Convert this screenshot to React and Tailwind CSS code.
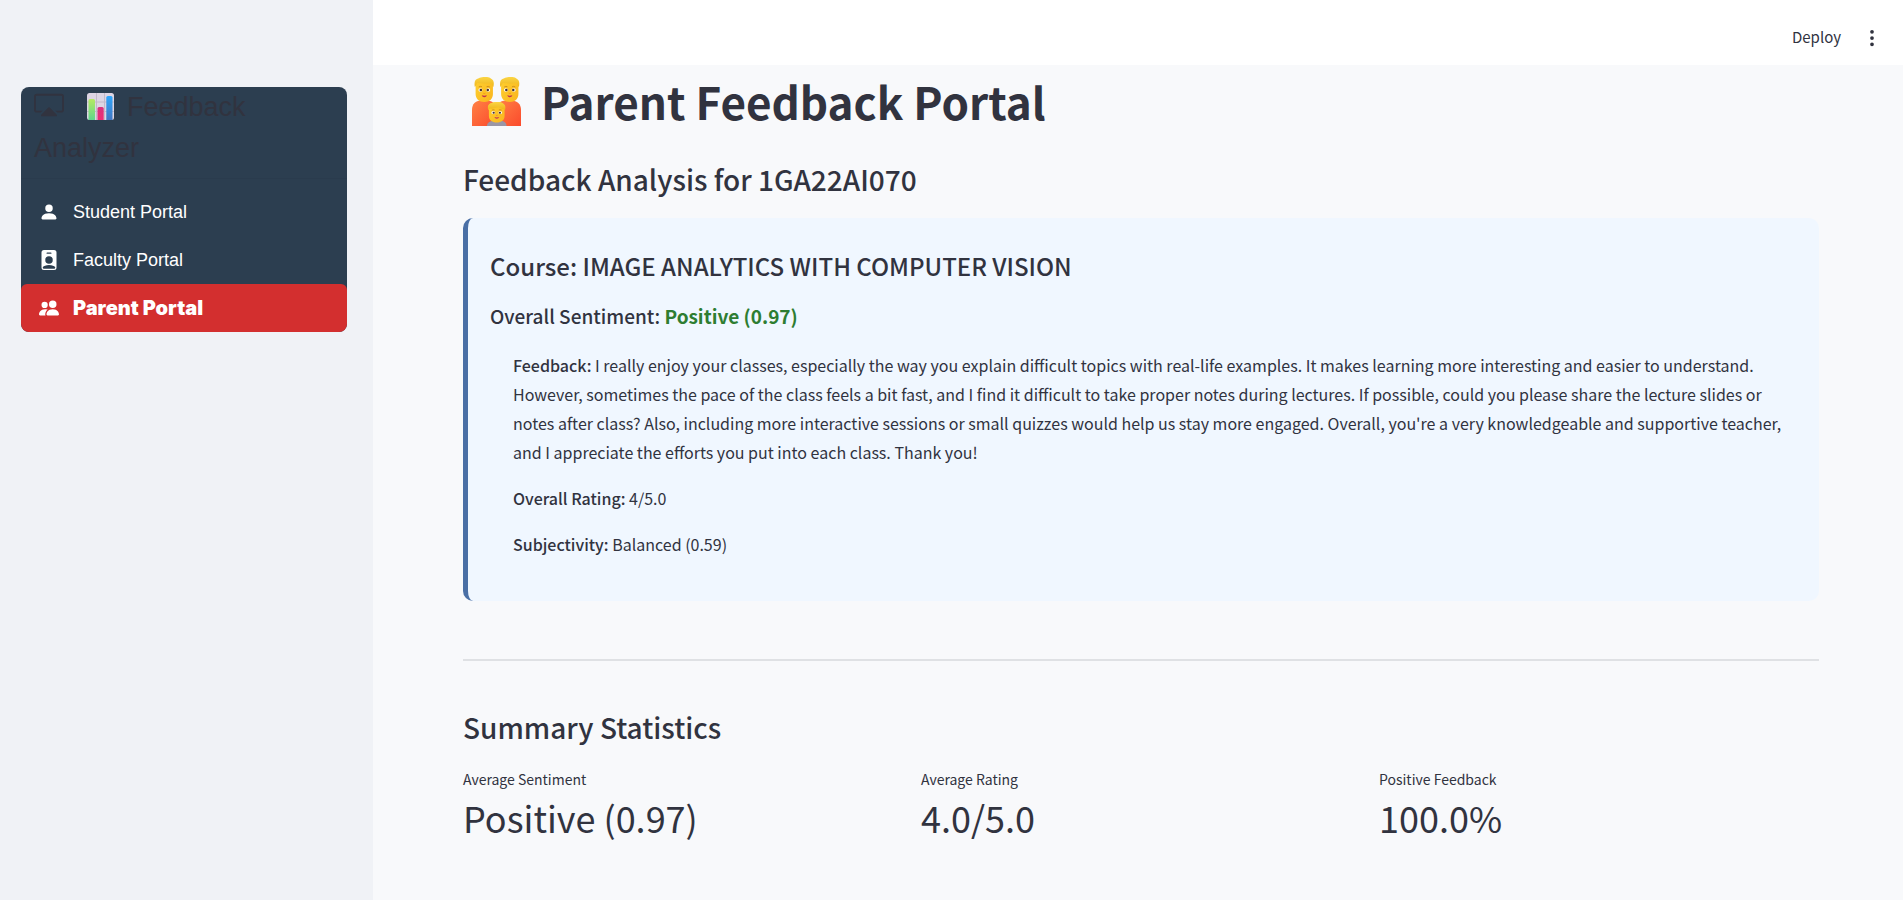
import { BsCast, BsPersonFill, BsPersonBadgeFill, BsPeopleFill, BsThreeDotsVertical } from "react-icons/bs";

const navItems = [
  { label: "Student Portal", Icon: BsPersonFill },
  { label: "Faculty Portal", Icon: BsPersonBadgeFill },
  { label: "Parent Portal", Icon: BsPeopleFill, active: true },
];

const metrics = [
  { label: "Average Sentiment", value: "Positive (0.97)" },
  { label: "Average Rating", value: "4.0/5.0" },
  { label: "Positive Feedback", value: "100.0%" },
];

function ChartIcon() {
  return (
    <svg viewBox="0 0 27 27" className="inline-block h-[27px] w-[27px] align-[-4px]" aria-hidden="true">
      <defs>
        <linearGradient id="barGreen" x1="0" y1="0" x2="0" y2="1">
          <stop offset="0" stopColor="#b6ea62" />
          <stop offset="1" stopColor="#5fd68c" />
        </linearGradient>
        <linearGradient id="barPink" x1="0" y1="0" x2="0" y2="1">
          <stop offset="0" stopColor="#d8327f" />
          <stop offset="1" stopColor="#ee2d74" />
        </linearGradient>
        <linearGradient id="barBlue" x1="0" y1="0" x2="0" y2="1">
          <stop offset="0" stopColor="#2fa6fb" />
          <stop offset="1" stopColor="#4277c4" />
        </linearGradient>
      </defs>
      <rect width="27" height="27" rx="2.5" fill="#ddd5e3" />
      <path d="M9.500 0v27M17.500 0v27M0 9h27M0 18.500h27" stroke="#c2b9c9" strokeWidth="1" />
      <path d="M1.500 27V7.500a1.500 1.500 0 0 1 1.500-1.500h3.500a1.500 1.500 0 0 1 1.500 1.500V27z" fill="url(#barGreen)" />
      <path d="M10.500 27V15.500a1.500 1.500 0 0 1 1.500-1.500h3.200a1.500 1.500 0 0 1 1.500 1.500V27z" fill="url(#barPink)" />
      <path d="M19.300 27V4.500a1.500 1.500 0 0 1 1.500-1.500h3.200a1.500 1.500 0 0 1 1.500 1.500V27z" fill="url(#barBlue)" />
    </svg>
  );
}

function Head() {
  return (
    <g>
      <path d="M2 9C2 4 5 1 10 1s9 2.500 8.500 8v8c0 5-3.500 8-8.200 8S2 22 2 17z" fill="url(#skin)" />
      <path d="M1.300 10C.3 5 1.500 2 5 1.300 8-.6 15-.6 16.500 1.500c3 1.500 3.300 4.500 2.400 8.500-1-.8-1.300-2.200-2.200-3.700-3.700.6-9.500.6-13-.2C2.700 7.500 2.500 9 1.300 10z" fill="url(#hair)" />
      <ellipse cx="6.600" cy="13" rx="1.900" ry="1.700" fill="#fff" />
      <ellipse cx="14" cy="13" rx="1.900" ry="1.700" fill="#fff" />
      <circle cx="7" cy="13" r="1.200" fill="#46302e" />
      <circle cx="13.600" cy="13" r="1.200" fill="#46302e" />
      <path d="M5 10q1.500-1 3-.3M12.500 9.700q1.500-.7 3 .3" stroke="#c98a1d" strokeWidth=".9" fill="none" />
      <path d="M7.800 18.300q2.500.9 5 0-.6 2-2.500 2t-2.500-2z" fill="#c02f52" />
      <path d="M9.300 16.200q1 .6 2 0" stroke="#f08a1c" strokeWidth=".8" fill="none" />
    </g>
  );
}

function FamilyIcon() {
  return (
    <svg viewBox="0 0 49 49" className="h-[49px] w-[49px]" aria-hidden="true">
      <defs>
        <linearGradient id="skin" x1="0" y1="0" x2="1" y2="1">
          <stop offset="0" stopColor="#ffd02e" />
          <stop offset="1" stopColor="#f9b51f" />
        </linearGradient>
        <linearGradient id="hair" x1="0" y1="0" x2="0" y2="1">
          <stop offset="0" stopColor="#fbd544" />
          <stop offset="1" stopColor="#efb61c" />
        </linearGradient>
        <linearGradient id="shirt" x1="0" y1="0" x2="1" y2="1">
          <stop offset="0" stopColor="#ff8245" />
          <stop offset="1" stopColor="#fb4a2c" />
        </linearGradient>
      </defs>
      <path d="M0 49V33c0-6 3.500-9.500 9-9.500h6c5.500 0 9.500 3.500 9.500 9.500v16z" fill="url(#shirt)" />
      <path d="M24.500 49V33c0-6 3.500-9.500 9-9.500h6c5.500 0 9.500 3.500 9.500 9.500v16z" fill="url(#shirt)" />
      <g transform="translate(1.500 0) scale(1.05 1)"><Head /></g>
      <g transform="translate(27 0) scale(1.05 1)"><Head /></g>
      <path d="M15 49c0-3.500 3-5 6-5h8c3 0 5.500 1.500 5.500 5z" fill="#9a96a5" />
      <g transform="translate(15 25) scale(.95 .82)">
        <Head />
        <path d="M1.500 9C0 4 4 0 10 0c6-.2 9.500 3 9 9-4-.5-6-2-7-3.500C10 7 6 8.500 3 8z" fill="url(#hair)" />
      </g>
    </svg>
  );
}

export default function App() {
  return (
    <div className="flex min-h-screen bg-[#f8f9fb] font-['Source_Sans_Pro','Noto_Sans_CJK_SC',sans-serif] text-[#31333f]">
      <aside className="w-[373px] shrink-0 bg-[#f0f2f6] pt-[87px] pr-[26px] pl-[21px] font-['Liberation_Sans',Arial,sans-serif]">
        <nav className="overflow-hidden rounded-lg bg-[#2c3e50]">
          <h2 className="border-b border-[#2a3b4d] px-[13px] pb-[9px] text-[27px] leading-[41px]">
            <BsCast className="mr-[23px] inline-block h-[30px] w-[30px] align-[-4px]" />
            <ChartIcon />
            <span className="ml-[13px]">Feedback Analyzer</span>
          </h2>
          <ul className="pt-[9px]">
            {navItems.map(({ label, Icon, active }) => (
              <li key={label}>
                <a
                  href="#"
                  className={
                    active
                      ? "flex h-12 items-center gap-[14px] rounded-md bg-[#d32f2f] px-[18px] font-['Inter','Liberation_Sans',sans-serif] text-xl font-black text-white"
                      : "flex h-12 items-center gap-[14px] px-[18px] text-lg text-white"
                  }
                >
                  <Icon className="h-5 w-5" />
                  {label}
                </a>
              </li>
            ))}
          </ul>
        </nav>
      </aside>

      <div className="flex min-w-0 flex-1 flex-col">
        <header className="flex h-[65px] items-center justify-end gap-[21px] bg-white pt-[10px] pr-[21px]">
          <button type="button" className="text-[15px]">Deploy</button>
          <button type="button" aria-label="Main menu">
            <BsThreeDotsVertical className="h-5 w-5" />
          </button>
        </header>

        <main className="flex-1 pr-[84px] pl-[90px]">
          <h1 className="flex h-[72px] items-center gap-5 pl-[9px] text-[44px] font-bold">
            <FamilyIcon />
            Parent Feedback Portal
          </h1>
          <h2 className="pt-[22px] pb-[19px] text-[28px] leading-[40px] font-medium">Feedback Analysis for 1GA22AI070</h2>

          <section className="rounded-[10px] border-l-[5px] border-[#4a6fa5] bg-[#f0f7ff] px-[22px] pt-[30px] pb-[42px]">
            <h3 className="text-[24px] leading-9 font-medium">Course: IMAGE ANALYTICS WITH COMPUTER VISION</h3>
            <h4 className="pt-4 text-[19px] leading-8 font-medium">
              Overall Sentiment: <span className="font-bold text-[#2e7d32]">Positive (0.97)</span>
            </h4>
            <div className="flex flex-col gap-[17px] px-[23px] pt-[19px] pr-0 text-base leading-[29px]">
              <p>
                <strong className="font-medium">Feedback:</strong> I really enjoy your classes, especially the way you explain difficult topics with real-life examples. It makes learning more interesting and easier to understand. However, sometimes the pace of the class feels a bit fast, and I find it difficult to take proper notes during lectures. If possible, could you please share the lecture slides or notes after class? Also, including more interactive sessions or small quizzes would help us stay more engaged. Overall, you're a very knowledgeable and supportive teacher, and I appreciate the efforts you put into each class. Thank you!
              </p>
              <p><strong className="font-medium">Overall Rating:</strong> 4/5.0</p>
              <p><strong className="font-medium">Subjectivity:</strong> Balanced (0.59)</p>
            </div>
          </section>

          <hr className="mt-[58px] mb-[46px] border-t-2 border-[#dfe1e4]" />

          <h2 className="text-[28px] leading-[40px] font-medium">Summary Statistics</h2>
          <dl className="grid grid-cols-3 gap-[18px] pt-5">
            {metrics.map(({ label, value }) => (
              <div key={label}>
                <dt className="text-[14px] leading-6">{label}</dt>
                <dd className="text-[36px] leading-[53px]">{value}</dd>
              </div>
            ))}
          </dl>
        </main>
      </div>
    </div>
  );
}
